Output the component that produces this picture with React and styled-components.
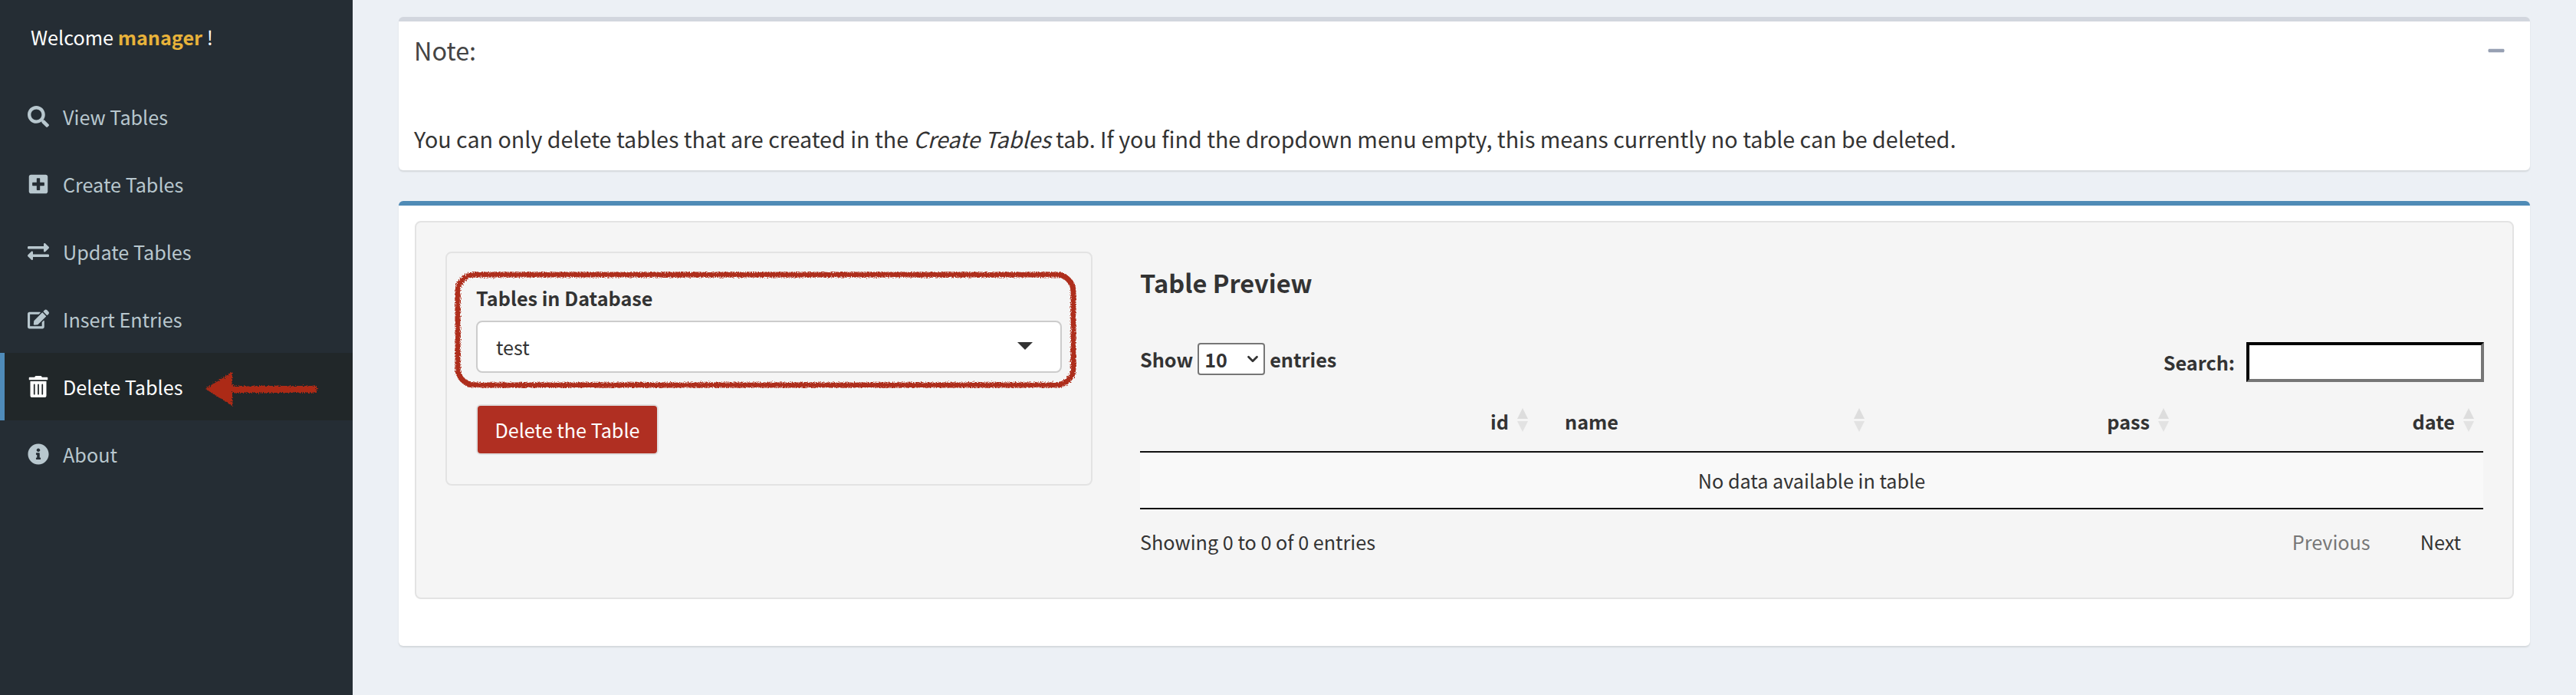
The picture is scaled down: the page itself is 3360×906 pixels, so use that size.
import React from 'react'
import styled, { createGlobalStyle } from 'styled-components'
import { FaSearch, FaPlusSquare, FaExchangeAlt, FaEdit, FaTrashAlt, FaInfoCircle, FaMinus } from 'react-icons/fa'
import { ChevronDown } from 'lucide-react'

const GlobalStyle = createGlobalStyle`
  html, body { margin: 0; padding: 0; background: #ecf0f5; }
  * { box-sizing: border-box; }
  body {
    font-family: "Noto Sans CJK SC", "Noto Sans", sans-serif;
    font-size: 25.2px;
    color: #333;
  }
`

const Page = styled.div`
  display: flex;
  width: 3360px;
  height: 906px;
  overflow: hidden;
`

const Sidebar = styled.aside`
  width: 460px;
  flex: none;
  background: #252d34;
`

const Welcome = styled.div`
  height: 96px;
  margin-bottom: 12px;
  padding-left: 40px;
  display: flex;
  align-items: center;
  color: #fff;
  white-space: pre;
  b { color: #e8b23a; font-weight: 700; }
`

const NavItem = styled.div`
  position: relative;
  height: 88px;
  display: flex;
  align-items: center;
  padding-left: ${p => (p.$active ? '30px' : '36px')};
  border-left: ${p => (p.$active ? '6px solid #4f8bb9' : 'none')};
  background: ${p => (p.$active ? '#212729' : 'transparent')};
  color: ${p => (p.$active ? '#fff' : '#b8c7ce')};
`

const NavIcon = styled.span`
  width: 46px;
  flex: none;
  display: flex;
  align-items: center;
  font-size: 28px;
`

const Arrow = styled.svg`
  position: absolute;
  left: 254px;
  top: 16px;
`

const Main = styled.main`
  flex: 1;
  padding: 22px 60px 0;
`

const Box = styled.section`
  background: #fff;
  border-top: 6px solid ${p => p.$accent};
  border-radius: 6px;
  box-shadow: 0 2px 2px rgba(0, 0, 0, 0.1);
`

const NoteBox = styled(Box)`
  height: 200px;
  margin-bottom: 40px;
`

const NoteHeader = styled.div`
  height: 72px;
  padding: 0 32px 0 20px;
  display: flex;
  align-items: center;
  justify-content: space-between;
  font-size: 32.4px;
  color: #444;
  svg { color: #97a0b3; font-size: 24px; margin-top: 4px; }
`

const NoteText = styled.p`
  margin: 61px 0 0;
  padding: 0 20px;
  line-height: 40px;
  font-size: 28.68px;
`

const MainBox = styled(Box)`
  height: 580px;
  padding: 20px 21px;
`

const Well = styled.div`
  height: 493px;
  display: flex;
  gap: 62px;
  padding: 38px 37px 0 38px;
  background: #f5f5f5;
  border: 2px solid #e3e3e3;
  border-radius: 8px;
`

const Panel = styled.div`
  position: relative;
  width: 844px;
  height: 305px;
  flex: none;
  padding: 38px;
  background: #f5f5f5;
  border: 2px solid #e3e3e3;
  border-radius: 8px;
`

const Scribble = styled.svg`
  position: absolute;
  left: 10px;
  top: 24px;
  pointer-events: none;
`

const FieldLabel = styled.div`
  height: 40px;
  line-height: 40px;
  margin-bottom: 10px;
  font-weight: 700;
`

const Selectize = styled.div`
  position: relative;
  height: 68px;
  width: 764px;
  display: flex;
  align-items: center;
  padding-left: 24px;
  background: #fff;
  border: 2px solid #ccc;
  border-radius: 8px;
  &::after {
    content: '';
    position: absolute;
    right: 36px;
    top: 26px;
    border-style: solid;
    border-width: 10px 10px 0;
    border-color: #333 transparent transparent;
  }
`

const DangerButton = styled.button`
  display: block;
  margin-top: 41px;
  width: 238px;
  height: 66px;
  padding: 0;
  background: #b02f22;
  border: 2px solid #e0e0e0;
  border-radius: 6px;
  color: #fff;
  font: inherit;
`

const Preview = styled.div`
  flex: 1;
  min-width: 0;
`

const PreviewTitle = styled.h3`
  margin: 0 0 40px;
  height: 78px;
  display: flex;
  align-items: center;
  font-size: 32.6px;
  font-weight: 700;
`

const Controls = styled.div`
  height: 52px;
  display: flex;
  justify-content: space-between;
  font-weight: 700;
`

const LengthLabel = styled.label`
  display: flex;
  align-items: center;
  gap: 6px;
  height: 42px;
  margin-top: 1px;
`

const SelectWrap = styled.span`
  position: relative;
  display: block;
  width: 88px;
  height: 42px;
  svg {
    position: absolute;
    right: 5px;
    top: 10px;
    color: #333;
    pointer-events: none;
  }
`

const LengthSelect = styled.select`
  display: block;
  width: 100%;
  height: 100%;
  padding: 0 0 0 7px;
  appearance: none;
  font: inherit;
  background: #fff;
  color: #333;
  border: 2px solid #767676;
  border-radius: 4px;
`

const SearchLabel = styled.label`
  display: flex;
  align-items: center;
  gap: 15px;
`

const SearchInput = styled.input`
  width: 310px;
  height: 52px;
  background: #fff;
  border: 4px inset #767676;
  border-top-color: #222;
  border-left-color: #222;
`

const DataTable = styled.table`
  margin-top: 12px;
  width: 1752px;
  table-layout: fixed;
  border-collapse: collapse;
`

const Th = styled.th`
  position: relative;
  height: 79px;
  padding: 0 37px 0 ${p => (p.$align === 'left' ? '36px' : '20px')};
  border-bottom: 2px solid #111;
  text-align: ${p => p.$align};
  font-weight: 700;
`

const SortIcon = styled.svg`
  position: absolute;
  right: 11px;
  top: 22px;
`

const EmptyCell = styled.td`
  height: 74px;
  padding: 0;
  background: #f9f9f9;
  border-bottom: 2px solid #111;
  text-align: center;
`

const TableFooter = styled.div`
  margin-top: 22px;
  height: 40px;
  display: flex;
  align-items: center;
  justify-content: space-between;
`

const Pager = styled.div`
  display: flex;
  gap: 65px;
  padding-right: 30px;
`

const PageLink = styled.span`
  color: ${p => (p.$disabled ? '#777' : '#333')};
`

const navItems = [
  { label: 'View Tables', icon: FaSearch },
  { label: 'Create Tables', icon: FaPlusSquare },
  { label: 'Update Tables', icon: FaExchangeAlt },
  { label: 'Insert Entries', icon: FaEdit },
  { label: 'Delete Tables', icon: FaTrashAlt, active: true },
  { label: 'About', icon: FaInfoCircle },
]

const columns = [
  { name: 'id', width: 518, align: 'right' },
  { name: 'name', width: 439, align: 'left' },
  { name: 'pass', width: 397, align: 'right' },
  { name: 'date', width: 398, align: 'right' },
]

const Sort = () => (
  <SortIcon width="16" height="32" viewBox="0 0 16 32">
    <path d="M8 0 L15 14 H1 Z" fill="#ddd" />
    <path d="M8 31 L15 17 H1 Z" fill="#e2e2e2" />
  </SortIcon>
)

const RoughFilter = ({ id }) => (
  <filter id={id} x="-5%" y="-20%" width="110%" height="140%">
    <feTurbulence type="fractalNoise" baseFrequency="0.7" numOctaves="2" seed="4" />
    <feDisplacementMap in="SourceGraphic" scale="6" />
  </filter>
)

const App = () => {
  return (
    <Page>
      <GlobalStyle />
      <Sidebar>
        <Welcome>Welcome <b>manager</b> !</Welcome>
        {navItems.map(({ label, icon: Icon, active }) => (
          <NavItem key={label} $active={active}>
            <NavIcon><Icon /></NavIcon>
            {label}
            {active && (
              <Arrow width="170" height="60" viewBox="0 0 170 60">
                <RoughFilter id="rough-arrow" />
                <g fill="#ac2c18" filter="url(#rough-arrow)">
                  <path d="M8 31 L43 9 V53 Z" />
                  <rect x="43" y="27" width="110" height="9" />
                </g>
              </Arrow>
            )}
          </NavItem>
        ))}
      </Sidebar>
      <Main>
        <NoteBox $accent="#d2d6de">
          <NoteHeader>
            Note:
            <FaMinus />
          </NoteHeader>
          <NoteText>
            You can only delete tables that are created in the <i>Create Tables</i> tab. If you find the dropdown menu empty, this means currently no table can be deleted.
          </NoteText>
        </NoteBox>
        <MainBox $accent="#4f8bb6">
          <Well>
            <Panel>
              <FieldLabel>Tables in Database</FieldLabel>
              <Selectize>test</Selectize>
              <DangerButton>Delete the Table</DangerButton>
              <Scribble width="811" height="152" viewBox="0 0 811 152">
                <RoughFilter id="rough-outline" />
                <rect x="4" y="4" width="803" height="144" rx="22" fill="none" stroke="#ae2d1c" strokeWidth="7" filter="url(#rough-outline)" />
              </Scribble>
            </Panel>
            <Preview>
              <PreviewTitle>Table Preview</PreviewTitle>
              <Controls>
                <LengthLabel>
                  Show
                  <SelectWrap>
                    <LengthSelect defaultValue="10">
                      <option>10</option>
                      <option>25</option>
                      <option>50</option>
                      <option>100</option>
                    </LengthSelect>
                    <ChevronDown size={22} strokeWidth={3} />
                  </SelectWrap>
                  entries
                </LengthLabel>
                <SearchLabel>
                  Search:
                  <SearchInput />
                </SearchLabel>
              </Controls>
              <DataTable>
                <colgroup>
                  {columns.map(c => <col key={c.name} width={c.width} />)}
                </colgroup>
                <thead>
                  <tr>
                    {columns.map(c => (
                      <Th key={c.name} $align={c.align}>{c.name}<Sort /></Th>
                    ))}
                  </tr>
                </thead>
                <tbody>
                  <tr>
                    <EmptyCell colSpan={4}>No data available in table</EmptyCell>
                  </tr>
                </tbody>
              </DataTable>
              <TableFooter>
                <span>Showing 0 to 0 of 0 entries</span>
                <Pager>
                  <PageLink $disabled>Previous</PageLink>
                  <PageLink>Next</PageLink>
                </Pager>
              </TableFooter>
            </Preview>
          </Well>
        </MainBox>
      </Main>
    </Page>
  )
}

export default App
